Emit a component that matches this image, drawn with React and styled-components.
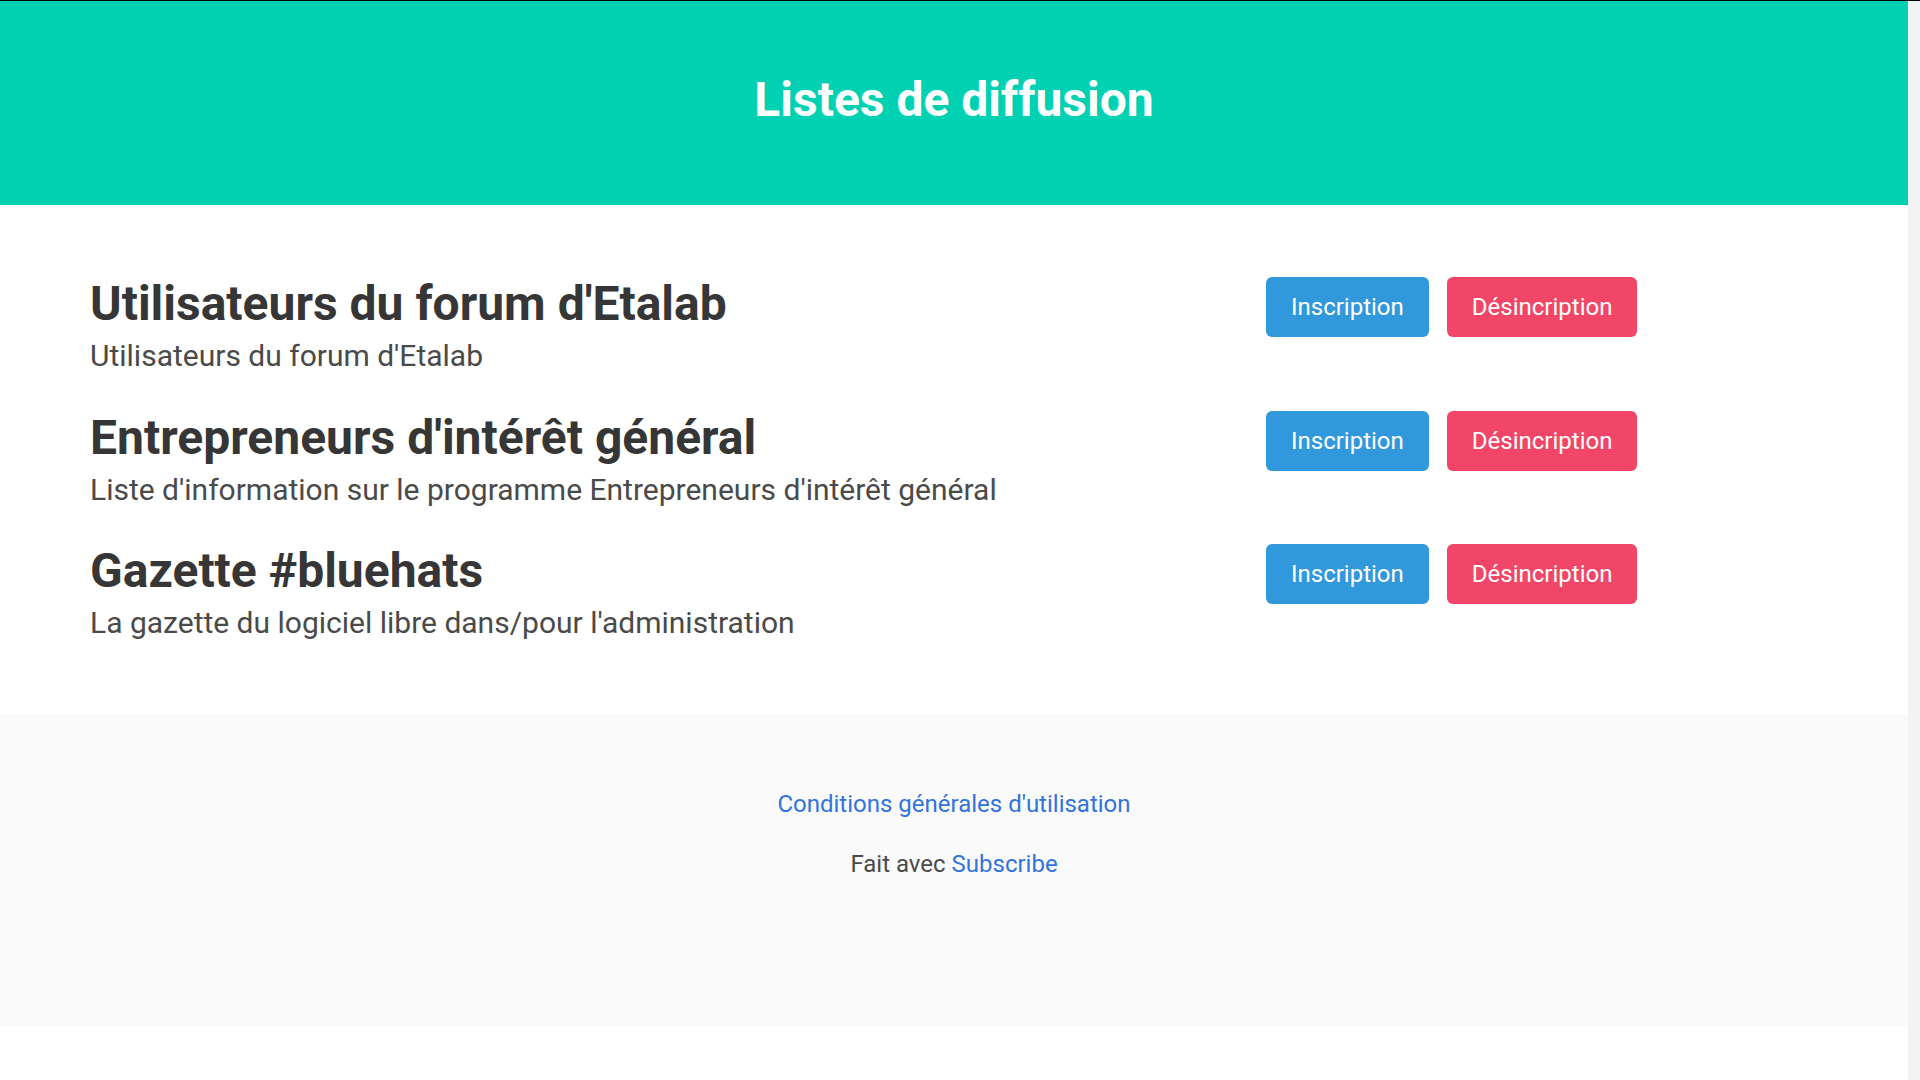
import React from 'react';
import styled, { createGlobalStyle } from 'styled-components';

const GlobalStyle = createGlobalStyle`
  html, body {
    margin: 0;
    padding: 0;
    background: #fff;
  }
  body {
    font-family: Roboto, "Liberation Sans", Arial, sans-serif;
    -webkit-font-smoothing: antialiased;
  }
  * {
    box-sizing: border-box;
  }
`;

const Window = styled.div`
  display: flex;
  height: 1080px;
  border-top: 1px solid #000;
  overflow: hidden;
`;

const Page = styled.div`
  flex: 1;
  display: flex;
  flex-direction: column;
`;

const Gutter = styled.div`
  width: 12px;
  background-color: #f3f3f3;
`;

const Hero = styled.header`
  background-color: #00d1b2;
  padding: 72px 36px 78px;
  text-align: center;
`;

const HeroTitle = styled.h1`
  margin: 0;
  font-size: 48px;
  line-height: 54px;
  font-weight: 700;
  color: #fff;
`;

const Section = styled.section`
  padding: 54px 0;
`;

const Container = styled.div`
  width: 1728px;
  margin: 0 auto;
`;

const Row = styled.div`
  display: grid;
  grid-template-columns: 1176px 1fr;
  padding: 18px 0;
`;

const ListTitle = styled.h2`
  margin: 0 0 6px;
  font-size: 48px;
  line-height: 54px;
  font-weight: 700;
  color: #363636;
`;

const ListSubtitle = styled.p`
  margin: 0;
  font-size: 30px;
  line-height: 37.5px;
  font-weight: 400;
  color: #4a4a4a;
`;

const Buttons = styled.div`
  display: flex;
  align-items: flex-start;
  gap: 18px;
`;

const Button = styled.button`
  height: 60px;
  padding: 0 24px;
  border: 1px solid transparent;
  border-radius: 6px;
  background-color: ${(p) => p.$color};
  color: #fff;
  font-family: inherit;
  font-size: 24px;
  line-height: 36px;
  cursor: pointer;
`;

const Footer = styled.footer`
  background-color: #fafafa;
  padding: 72px 36px 144px;
  text-align: center;
  font-size: 24px;
  line-height: 36px;
  color: #4a4a4a;

  & > p {
    margin: 0 0 24px;
  }
  & > p:last-child {
    margin-bottom: 0;
  }
`;

const Link = styled.a`
  color: #3273dc;
  text-decoration: none;
`;

const lists = [
  {
    title: "Utilisateurs du forum d'Etalab",
    description: "Utilisateurs du forum d'Etalab",
  },
  {
    title: "Entrepreneurs d'intérêt général",
    description: "Liste d'information sur le programme Entrepreneurs d'intérêt général",
  },
  {
    title: 'Gazette #bluehats',
    description: "La gazette du logiciel libre dans/pour l'administration",
  },
];

function App() {
  return (
    <Window>
      <GlobalStyle />
      <Page>
        <Hero>
          <HeroTitle>Listes de diffusion</HeroTitle>
        </Hero>
        <Section>
          <Container>
            {lists.map((list) => (
              <Row key={list.title}>
                <div>
                  <ListTitle>{list.title}</ListTitle>
                  <ListSubtitle>{list.description}</ListSubtitle>
                </div>
                <Buttons>
                  <Button $color="#3298dc">Inscription</Button>
                  <Button $color="#f14668">Désincription</Button>
                </Buttons>
              </Row>
            ))}
          </Container>
        </Section>
        <Footer>
          <p>
            <Link href="#">Conditions générales d'utilisation</Link>
          </p>
          <p>
            Fait avec <Link href="#">Subscribe</Link>
          </p>
        </Footer>
      </Page>
      <Gutter />
    </Window>
  );
}

export default App;
